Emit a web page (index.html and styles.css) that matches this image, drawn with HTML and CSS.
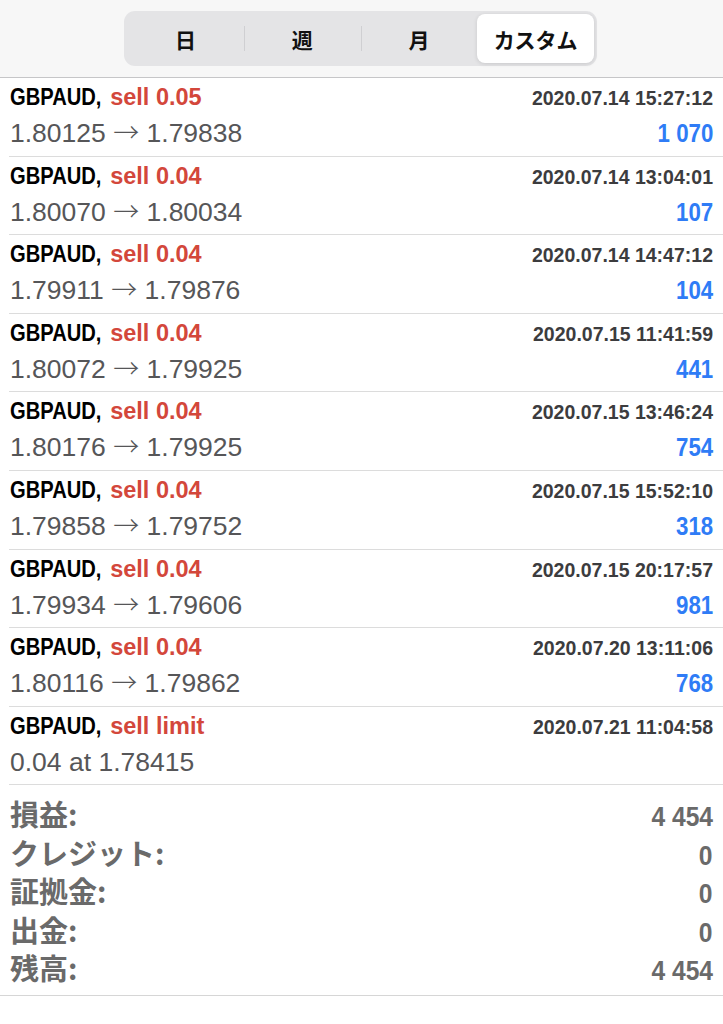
FILE: index.html
```html
<!DOCTYPE html>
<html lang="ja">
<head>
  <meta charset="UTF-8">
  <meta name="viewport" content="width=device-width, initial-scale=1.0">
  <title>履歴</title>
  <link rel="stylesheet" href="styles.css">
</head>
<body>
  <header class="top">
    <div class="segments">
      <div class="seg">日</div>
      <div class="seg">週</div>
      <div class="seg">月</div>
      <div class="seg active">カスタム</div>
    </div>
  </header>

  <div class="deals">
    <div class="deal">
      <div class="line"><span class="sym">GBPAUD,</span><span class="side">sell 0.05</span><span class="time">2020.07.14 15:27:12</span></div>
      <div class="line"><span class="price">1.80125 <span class="arrow">→</span> 1.79838</span><span class="profit">1 070</span></div>
    </div>
    <div class="deal">
      <div class="line"><span class="sym">GBPAUD,</span><span class="side">sell 0.04</span><span class="time">2020.07.14 13:04:01</span></div>
      <div class="line"><span class="price">1.80070 <span class="arrow">→</span> 1.80034</span><span class="profit">107</span></div>
    </div>
    <div class="deal">
      <div class="line"><span class="sym">GBPAUD,</span><span class="side">sell 0.04</span><span class="time">2020.07.14 14:47:12</span></div>
      <div class="line"><span class="price">1.79911 <span class="arrow">→</span> 1.79876</span><span class="profit">104</span></div>
    </div>
    <div class="deal">
      <div class="line"><span class="sym">GBPAUD,</span><span class="side">sell 0.04</span><span class="time">2020.07.15 11:41:59</span></div>
      <div class="line"><span class="price">1.80072 <span class="arrow">→</span> 1.79925</span><span class="profit">441</span></div>
    </div>
    <div class="deal">
      <div class="line"><span class="sym">GBPAUD,</span><span class="side">sell 0.04</span><span class="time">2020.07.15 13:46:24</span></div>
      <div class="line"><span class="price">1.80176 <span class="arrow">→</span> 1.79925</span><span class="profit">754</span></div>
    </div>
    <div class="deal">
      <div class="line"><span class="sym">GBPAUD,</span><span class="side">sell 0.04</span><span class="time">2020.07.15 15:52:10</span></div>
      <div class="line"><span class="price">1.79858 <span class="arrow">→</span> 1.79752</span><span class="profit">318</span></div>
    </div>
    <div class="deal">
      <div class="line"><span class="sym">GBPAUD,</span><span class="side">sell 0.04</span><span class="time">2020.07.15 20:17:57</span></div>
      <div class="line"><span class="price">1.79934 <span class="arrow">→</span> 1.79606</span><span class="profit">981</span></div>
    </div>
    <div class="deal">
      <div class="line"><span class="sym">GBPAUD,</span><span class="side">sell 0.04</span><span class="time">2020.07.20 13:11:06</span></div>
      <div class="line"><span class="price">1.80116 <span class="arrow">→</span> 1.79862</span><span class="profit">768</span></div>
    </div>
    <div class="deal">
      <div class="line"><span class="sym">GBPAUD,</span><span class="side">sell limit</span><span class="time">2020.07.21 11:04:58</span></div>
      <div class="line"><span class="price">0.04 at 1.78415</span></div>
    </div>
  </div>

  <div class="summary">
    <div class="sum-row"><span class="sum-label">損益:</span><span class="sum-value">4 454</span></div>
    <div class="sum-row"><span class="sum-label">クレジット:</span><span class="sum-value">0</span></div>
    <div class="sum-row"><span class="sum-label">証拠金:</span><span class="sum-value">0</span></div>
    <div class="sum-row"><span class="sum-label">出金:</span><span class="sum-value">0</span></div>
    <div class="sum-row"><span class="sum-label">残高:</span><span class="sum-value">4 454</span></div>
  </div>
</body>
</html>
```

FILE: styles.css
```css
body {
  margin: 0;
  font-family: "Liberation Sans", Arial, "Noto Sans CJK JP", sans-serif;
  background-color: #fff;
  color: #000;
}
.top {
  height: 77px;
  background-color: #f7f7f7;
  border-bottom: 1px solid #c6c6c8;
  display: flex;
  justify-content: center;
}
.segments {
  margin-top: 11px;
  margin-left: -2px;
  width: 473px;
  height: 55px;
  box-sizing: border-box;
  padding: 3px;
  background-color: #e4e4e6;
  border-radius: 11px;
  display: flex;
  align-items: center;
}
.seg {
  flex: 1;
  height: 49px;
  display: flex;
  align-items: center;
  justify-content: center;
  font-family: "Noto Sans CJK JP", sans-serif;
  font-weight: bold;
  font-size: 21px;
  color: #111;
  position: relative;
}
.seg + .seg::before {
  content: "";
  position: absolute;
  left: 0;
  top: 12px;
  height: 25px;
  border-left: 1px solid #cfcfd2;
}
.seg.active {
  background-color: #fff;
  border-radius: 8px;
  box-shadow: 0 1px 4px rgba(0, 0, 0, 0.12);
}
.seg.active::before {
  display: none;
}

/* сделки */
.deal {
  margin-left: 9px;
  padding: 1px 10px 0 1px;
  height: 78.6px;
  box-sizing: border-box;
  border-bottom: 1px solid #dcdcdc;
}
.line {
  display: flex;
  align-items: baseline;
  height: 36px;
  line-height: 36px;
}
/* жирный шрифт в оригинале узкий, сжимаем по ширине */
.sym {
  display: inline-block;
  font-weight: bold;
  font-size: 24px;
  color: #000;
  transform: scaleX(0.84);
  transform-origin: left;
  margin-right: -8.7px;
}
.side {
  font-weight: bold;
  font-size: 23.5px;
  color: #d3473b;
}
.time {
  margin-left: auto;
  font-weight: bold;
  font-size: 19.5px;
  color: #3c3c3e;
}
.price {
  font-size: 26.5px;
  color: #565658;
}
.arrow {
  font-family: "Noto Sans CJK JP", sans-serif;
  font-weight: 300;
  font-size: 26px;
  line-height: 1;
}
.profit {
  display: inline-block;
  margin-left: auto;
  font-weight: bold;
  font-size: 26.5px;
  color: #2f7cf6;
  transform: scaleX(0.84);
  transform-origin: right;
}

/* итоги */
.summary {
  padding: 9px 10px 8px 10px;
  border-bottom: 1px solid #d6d6d6;
}
.sum-row {
  display: flex;
  justify-content: space-between;
  align-items: baseline;
  height: 38.5px;
  line-height: 38.5px;
  font-weight: bold;
  color: #6a6a6a;
}
.sum-label {
  font-family: "Noto Sans CJK JP", sans-serif;
  font-size: 29px;
}
.sum-value {
  display: inline-block;
  font-size: 28px;
  transform: scaleX(0.88);
  transform-origin: right;
}
```
